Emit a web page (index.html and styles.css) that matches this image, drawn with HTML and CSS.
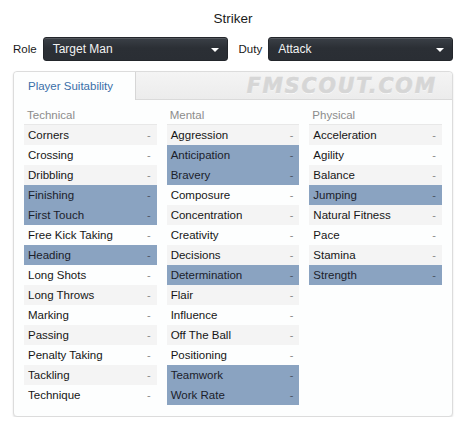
FILE: index.html
```html
<!DOCTYPE html>
<html>
<head>
<meta charset="utf-8">
<link rel="stylesheet" href="styles.css">
</head>
<body>
<div class="page">
  <h1 class="title">Striker</h1>
  <div class="controls">
    <span class="label">Role</span>
    <div class="select"><span>Target Man</span><span class="caret"></span></div>
    <span class="label duty">Duty</span>
    <div class="select"><span>Attack</span><span class="caret"></span></div>
  </div>
  <div class="panel">
    <div class="tabbar">
      <div class="tab">Player Suitability</div>
      <div class="watermark">FMSCOUT.COM</div>
    </div>
    <div class="cols">
      <div class="col">
        <div class="head">Technical</div>
        <ul class="rows">
          <li><span>Corners</span><i>-</i></li>
          <li><span>Crossing</span><i>-</i></li>
          <li><span>Dribbling</span><i>-</i></li>
          <li class="hl"><span>Finishing</span><i>-</i></li>
          <li class="hl"><span>First Touch</span><i>-</i></li>
          <li><span>Free Kick Taking</span><i>-</i></li>
          <li class="hl"><span>Heading</span><i>-</i></li>
          <li><span>Long Shots</span><i>-</i></li>
          <li><span>Long Throws</span><i>-</i></li>
          <li><span>Marking</span><i>-</i></li>
          <li><span>Passing</span><i>-</i></li>
          <li><span>Penalty Taking</span><i>-</i></li>
          <li><span>Tackling</span><i>-</i></li>
          <li><span>Technique</span><i>-</i></li>
        </ul>
      </div>
      <div class="col">
        <div class="head">Mental</div>
        <ul class="rows">
          <li><span>Aggression</span><i>-</i></li>
          <li class="hl"><span>Anticipation</span><i>-</i></li>
          <li class="hl"><span>Bravery</span><i>-</i></li>
          <li><span>Composure</span><i>-</i></li>
          <li><span>Concentration</span><i>-</i></li>
          <li><span>Creativity</span><i>-</i></li>
          <li><span>Decisions</span><i>-</i></li>
          <li class="hl"><span>Determination</span><i>-</i></li>
          <li><span>Flair</span><i>-</i></li>
          <li><span>Influence</span><i>-</i></li>
          <li><span>Off The Ball</span><i>-</i></li>
          <li><span>Positioning</span><i>-</i></li>
          <li class="hl"><span>Teamwork</span><i>-</i></li>
          <li class="hl"><span>Work Rate</span><i>-</i></li>
        </ul>
      </div>
      <div class="col">
        <div class="head">Physical</div>
        <ul class="rows">
          <li><span>Acceleration</span><i>-</i></li>
          <li><span>Agility</span><i>-</i></li>
          <li><span>Balance</span><i>-</i></li>
          <li class="hl"><span>Jumping</span><i>-</i></li>
          <li><span>Natural Fitness</span><i>-</i></li>
          <li><span>Pace</span><i>-</i></li>
          <li><span>Stamina</span><i>-</i></li>
          <li class="hl"><span>Strength</span><i>-</i></li>
        </ul>
      </div>
    </div>
  </div>
</div>
</body>
</html>
```

FILE: styles.css
```css
* { box-sizing: border-box; }
html, body { margin: 0; padding: 0; background: #fff; }
body {
  font-family: "Liberation Sans", Arial, sans-serif;
  font-size: 11.5px;
  color: #1a1a1a;
}
.page { width: 466px; padding: 0 13px; }
.title {
  margin: 0;
  padding-top: 11px;
  height: 37px;
  font-size: 13.5px;
  font-weight: normal;
  text-align: center;
  color: #1a1a1a;
  line-height: 16px;
}
.controls {
  display: flex;
  align-items: flex-start;
  height: 34px;
}
.label { line-height: 24px; font-size: 11.5px; color: #1a1a1a; }
.label.duty { margin-left: 11px; }
.select {
  flex: 1;
  height: 24px;
  margin-left: 6px;
  border-radius: 3px;
  background: linear-gradient(#3b4047, #2b2f35 45%, #2a2e34);
  border: 1px solid #23262b;
  box-shadow: inset 0 1px 0 rgba(255,255,255,0.13);
  display: flex;
  align-items: center;
  justify-content: space-between;
  padding: 0 8px 0 9px;
  color: #f2f2f2;
  font-size: 12px;
}
.caret {
  width: 0; height: 0;
  border-left: 4px solid transparent;
  border-right: 4px solid transparent;
  border-top: 4px solid #fff;
  margin-top: 1px;
}
.panel {
  width: 440px;
  border: 1px solid #dcdcdc;
  border-radius: 4px;
  background: #fdfefe;
  box-shadow: 0 1px 2px rgba(0,0,0,0.12);
  padding-bottom: 11px;
}
.tabbar {
  display: flex;
  height: 28px;
  background: linear-gradient(#f4f4f4, #ececec);
  border-bottom: 1px solid #dadada;
  border-radius: 4px 4px 0 0;
}
.tab {
  width: 122px;
  height: 28px;
  background: #fdfefe;
  border-right: 1px solid #d6d6d6;
  border-radius: 4px 0 0 0;
  color: #3a6ea8;
  font-size: 11.5px;
  line-height: 28px;
  padding-left: 14px;
}
.watermark {
  flex: 1;
  text-align: right;
  padding-right: 15px;
  font-family: "DejaVu Sans", sans-serif;
  font-weight: bold;
  font-style: italic;
  font-size: 20.5px;
  letter-spacing: 1.9px;
  color: #d6d6d6;
  text-shadow: 0 1px 0 #fff;
  -webkit-text-stroke: 0.6px #d6d6d6;
  line-height: 28px;
}
.cols {
  display: flex;
  gap: 10px;
  padding: 6px 10px 0 10px;
}
.col { width: 133px; }
.head {
  height: 19px;
  line-height: 18px;
  border-bottom: 1px solid #e8e8e8;
  color: #8c8c8c;
  padding-left: 3px;
  font-size: 11.5px;
}
.rows { list-style: none; margin: 0; padding: 0; }
.rows li {
  height: 20px;
  display: flex;
  align-items: center;
  justify-content: space-between;
  padding: 0 6px 0 4px;
  color: #161616;
  background: #fdfefe;
}
.rows li:nth-child(odd) { background: #f4f4f4; }
.rows li.hl { background: #8aa3c1; color: #1b212b; }
.rows li i {
  font-style: normal;
  color: #8a8a8a;
  font-size: 11px;
}
.rows li.hl i { color: #4a5566; }
```
